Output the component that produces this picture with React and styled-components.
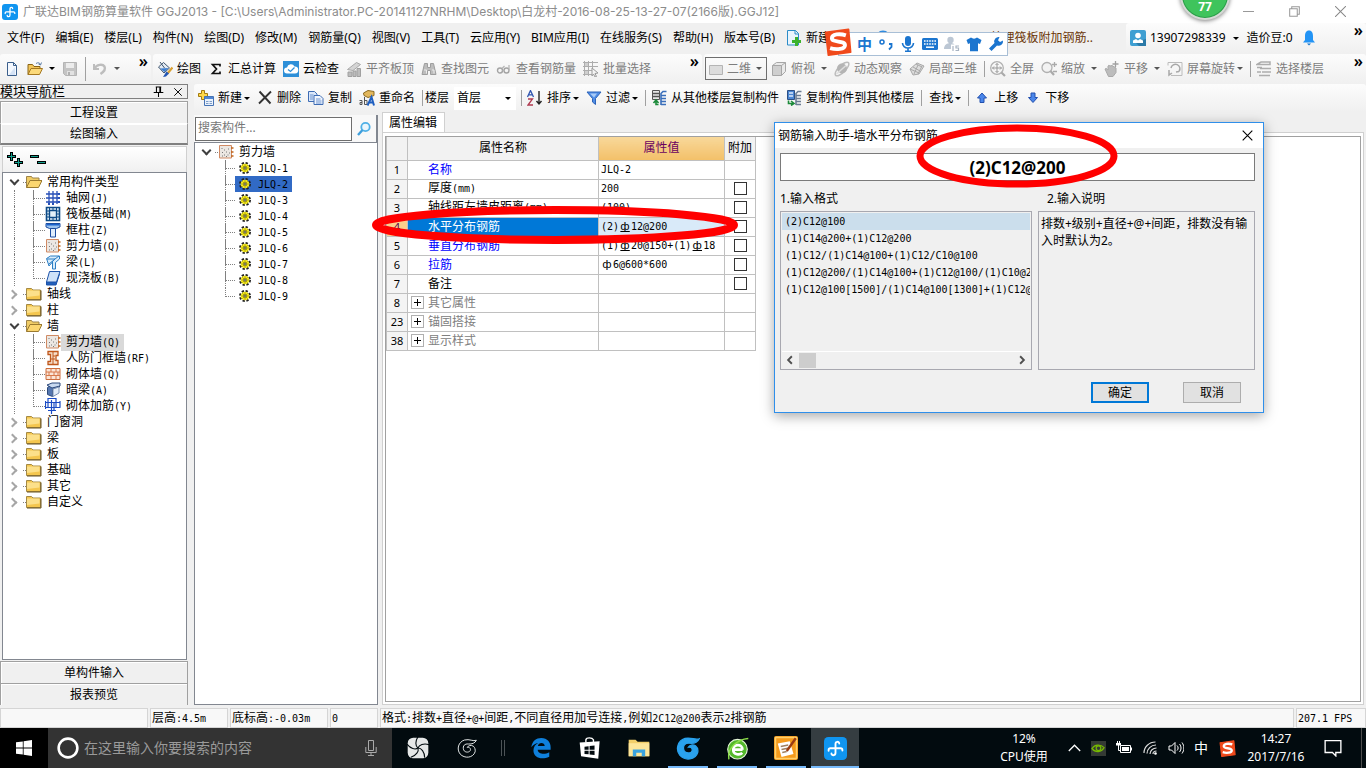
import { useState } from "react";
import styled, { createGlobalStyle } from "styled-components";

const GlobalStyle = createGlobalStyle`
  *, *::before {
    box-sizing: border-box;
  }
  body {
    margin: 0;
    font-family: "Noto Sans", "Noto Sans CJK SC", sans-serif;
    font-size: 12px;
    line-height: 16px;
    color: #000000;
    background-color: #f0f0f0;
  }
  button, input, select, textarea {
    font: inherit;
    color: inherit;
    margin: 0;
    padding: 0;
    border: none;
    background: none;
    outline: none;
  }
  svg {
    display: block;
    flex: none;
  }
`;

/* ---------- icons ---------- */

const Svg = ({ size = 16, children, ...rest }) => (
  <svg width={size} height={size} viewBox="0 0 16 16" fill="none" aria-hidden="true" {...rest}>
    {children}
  </svg>
);

const AppLogo = ({ size }) => (
  <Svg size={size}>
    <rect width="16" height="16" rx="3" fill="#1095f0" />
    <path
      d="M8 11V4.800C8 3 10.600 2.800 10.600 4.600M3.200 9.600V9c0-.8.400-1.200 1.200-1.200h7.200c.8 0 1.200.4 1.200 1.200v.4M8 11c0 2.200-2.800 2.200-2.800.4"
      stroke="#fff"
      strokeWidth="1.300"
      strokeLinecap="round"
    />
  </Svg>
);

const icons = {
  file: (
    <Svg>
      <path d="M3.500 1.500h6l3 3v10h-9z" fill="#f4f8fe" stroke="#3b5f8c" />
      <path d="M9.500 1.500v3h3" stroke="#3b5f8c" />
      <path d="M11 6v8H5z" fill="#d5e3f6" />
    </Svg>
  ),
  openFolder: (
    <Svg>
      <path d="M1 13.500V3.500h4.500l1.500 2h6v2" fill="#f3c65a" stroke="#8a6414" />
      <path d="M1 13.500l3-6h11.500l-3 6z" fill="#fbd97a" stroke="#a47720" />
      <path d="M9 2.500c2-1.500 4-.5 4.500 1M14.500 1.500l-1 2.500-2-1" stroke="#5c7ea8" />
    </Svg>
  ),
  save: (
    <Svg>
      <path d="M1.500 1.500h13v13h-11l-2-2z" fill="#c4c4c4" stroke="#b4b4b4" />
      <path d="M4 2h8v5H4z" fill="#ececec" />
      <path d="M5 10h7v4H5z" fill="#e2e2e2" />
      <path d="M6 11h2v3H6z" fill="#b0b0b0" />
    </Svg>
  ),
  undo: (
    <Svg>
      <path d="M2 3v5h5" stroke="#bdbdbd" strokeWidth="2" />
      <path d="M2.500 7.500c2-4 8-5 10-2 1.500 3-1 5.500-4 7.500" stroke="#bdbdbd" strokeWidth="2.400" />
    </Svg>
  ),
  draw: (
    <Svg>
      <path d="M1.500 6l5-4.500 6 5.500-5.500 5z" fill="#e3ebf4" stroke="#3f556e" />
      <path d="M3 1l4.500 6" stroke="#3f556e" />
      <path d="M3 7.500l8.500-.5-4 4z" fill="#3f7fd0" />
      <path d="M15.500 6.500l-5 6" stroke="#d9a032" strokeWidth="2.200" />
      <path d="M9.500 10.500l2.500 2-3 3-3 .5z" fill="#2457b4" />
    </Svg>
  ),
  sigma: (
    <Svg>
      <path d="M12 5.500V3.500H4.500L8.500 8l-4 4.500H12v-2" stroke="#111" strokeWidth="1.700" />
    </Svg>
  ),
  cloudCheck: (
    <Svg>
      <rect width="16" height="16" fill="#2d8fd8" />
      <path d="M4 12.500a3 3 0 010-6 4 4 0 017.500-1 3.500 3.500 0 01.5 7z" fill="#fff" />
      <path d="M5 8.500l2.500 2 4-4" stroke="#2d8fd8" strokeWidth="1.300" />
    </Svg>
  ),
  alignSlab: (
    <Svg>
      <path d="M1.500 8.500l9-7 4 2-7.500 6z" fill="#d5d5d5" stroke="#a9a9a9" />
      <path d="M2 11h4v4.500H2zM7 10h3v5.500H7zM11 7.500h3.500v8H11z" fill="#bcbcbc" stroke="#a0a0a0" />
    </Svg>
  ),
  binoculars: (
    <Svg>
      <path d="M3.500 2.500h3v4h3v-4h3l2.500 11H9.500V9.500h-3v4H1z" fill="#bdbdbd" stroke="#9e9e9e" />
      <path d="M3 9h2.500v3.500M11 9h2v3.500" stroke="#ececec" />
    </Svg>
  ),
  glasses: (
    <Svg>
      <circle cx="4" cy="9.500" r="2.500" stroke="#a4a4a4" strokeWidth="1.400" />
      <circle cx="10.500" cy="9.500" r="2.500" stroke="#a4a4a4" strokeWidth="1.400" />
      <path d="M6 7.500L8.500 5M13 9V4M6.500 9.500H8" stroke="#b4b4b4" strokeWidth="1.200" />
    </Svg>
  ),
  batch: (
    <Svg>
      <path d="M0 1.500h15M0 5.500h15M0 9.500h9M0 13.500h9M1.500 0v15M5.500 0v15M9.500 0v7" stroke="#adadad" />
      <path d="M2 2h3v3H2zM2 10h3v3H2z" fill="#cfcfcf" />
      <path d="M9 7l6 5-3 .5 1.500 3-1.500.5-1.500-3L9 15z" fill="#f4f4f4" stroke="#9a9a9a" />
    </Svg>
  ),
  plane: (
    <Svg>
      <path d="M1.500 4.500h13v9h-13z" fill="#dcdcdc" stroke="#b4b4b4" />
    </Svg>
  ),
  cube: (
    <Svg>
      <path d="M1.500 4.500l4-3h9v9l-4 4h-9z" fill="#e9e9e9" stroke="#a6a6a6" />
      <path d="M1.500 4.500h9v10M10.500 4.500l4-3" stroke="#a6a6a6" />
      <path d="M2 5h8v9H2z" fill="#cfcfcf" />
    </Svg>
  ),
  orbit: (
    <Svg>
      <ellipse cx="8" cy="8" rx="9" ry="3.500" transform="rotate(-45 8 8)" stroke="#bcbcbc" strokeWidth="1.500" />
      <circle cx="8" cy="7.500" r="5" fill="#b4b4b4" />
      <path d="M2.500 13L12 4.500" stroke="#dedede" strokeWidth="1.500" />
    </Svg>
  ),
  part3d: (
    <Svg>
      <path d="M1 8l7-6 7 3-5 8-6 1z" fill="#dedede" stroke="#a8a8a8" />
      <path d="M4 6l7 4M7 3l6 3M5 13l4-9M9 13l4-8M1 8l9 4" stroke="#a8a8a8" />
    </Svg>
  ),
  fullscreen: (
    <Svg>
      <circle cx="7" cy="7" r="6.300" stroke="#b0b0b0" strokeWidth="1.300" />
      <path d="M7 2.500v9M2.500 7h9M5.500 4L7 2.500 8.500 4M5.500 10L7 11.500 8.500 10M4 5.500L2.500 7 4 8.500M10 5.500L11.500 7 10 8.500" stroke="#999" />
      <path d="M11.500 11.500L15 15" stroke="#aaa" strokeWidth="2.200" />
    </Svg>
  ),
  zoom: (
    <Svg>
      <circle cx="6" cy="6.500" r="5" fill="#f2f2f2" stroke="#b0b0b0" strokeWidth="1.300" />
      <path d="M9.500 10l3.500 4" stroke="#aaa" strokeWidth="2.200" />
      <path d="M13.500 1v5M11 3.500h5M12 10.500h4" stroke="#aaa" strokeWidth="1.300" />
    </Svg>
  ),
  pan: (
    <Svg>
      <path d="M1 8c2-1.500 2.500 1 3 1V5c1-1.500 2 0 2 0l2-.5 4 2.500v4.500L9 15.500H4.500z" fill="#bcbcbc" stroke="#a8a8a8" />
      <path d="M11.500 0v6M8.500 3h6" stroke="#a0a0a0" strokeWidth="1.300" />
    </Svg>
  ),
  rotate: (
    <Svg>
      <path d="M1 4.500v-3h14v13H4" stroke="#bcbcbc" />
      <path d="M4 7a4.500 4.500 0 118 3.500M12 10.500l-3 .5M12 10.500l1-3M2 9v5l3-2" stroke="#a8a8a8" strokeWidth="1.500" />
    </Svg>
  ),
  floors: (
    <Svg>
      <path d="M1 3.500l4-2.500h9v2.500zM4 7.500h11M1 11h4M6 11h9M3 14.500h11M1 6.500h5" stroke="#adadad" strokeWidth="1.500" />
    </Svg>
  ),
  newItem: (
    <Svg>
      <path d="M3.500.5h3v3h3v3h-3v3h-3v-3h-3v-3h3z" fill="#ffd84a" stroke="#a37b10" />
      <path d="M6.500 6.500h9v9h-9z" fill="#eaf2fc" stroke="#4673b4" />
      <path d="M7 7h8v2H7z" fill="#4f86d4" />
      <path d="M8 11.500h2.500M11.500 11.500H14M8 13.500h2.500M11.500 13.500H14" stroke="#7d9dc8" />
    </Svg>
  ),
  cross: (
    <Svg>
      <path d="M2.500 1.500l11 12M14 1.500l-12 12" stroke="#333" strokeWidth="1.900" />
    </Svg>
  ),
  copy: (
    <Svg>
      <path d="M.5 1.500h6l2.500 2.500v7.500H.5z" fill="#dbe8fa" stroke="#3e6cb4" />
      <path d="M6 5.500h6l3 3v6H6z" fill="#f1f6fe" stroke="#3e6cb4" />
      <path d="M2 5h3.500M2 7h3M2 9h3M8 9h4.500M8 11h5.500M8 13h5.500" stroke="#6a92cf" />
    </Svg>
  ),
  rename: (
    <Svg>
      <path d="M4.500 3L9 .5l6 1v4L9 7.500 5 5.500z" fill="#e2b75c" stroke="#8b6a22" />
      <path d="M.5 10.500H3v4H1v-2h2M5.500 7v7.500H8v-4H5.500" stroke="#555" />
      <path d="M8.500 15.500L12.500 7 15 15.500M10 12.500h4.500" stroke="#1f5fc0" strokeWidth="2" />
    </Svg>
  ),
  sort: (
    <Svg>
      <path d="M.5 7L3.500 .5l3 6.500M1.500 4.800h4" stroke="#2f55b0" strokeWidth="1.300" />
      <path d="M1 9h4.500L1 15h5" stroke="#b03a50" strokeWidth="1.300" />
      <path d="M12 1v13M9.500 11l2.500 3 2.500-3" stroke="#222" strokeWidth="1.400" />
    </Svg>
  ),
  filter: (
    <Svg>
      <path d="M1 2h14L9.500 8.500V14.500l-3-2.500V8.500z" fill="#4f8de6" stroke="#2d63b8" />
      <path d="M4 3.500h7l-3 4z" fill="#a9cbf7" />
    </Svg>
  ),
  fromFloor: (
    <Svg>
      <path d="M1.500.5h7v9h-7z" fill="#e8e8e8" stroke="#555" />
      <path d="M2 3.500h6M2 6.500h6" stroke="#555" strokeWidth="1.600" />
      <path d="M10 15V3.500L12 1.500h3.500M10 5.500h5M10 8.500h5M10 11.500h5M10 14.500h5" stroke="#3a6fbb" strokeWidth="1.600" />
      <path d="M7.500 14.500H5V11M2.500 13L5 10l2.500 3" stroke="#1c8a3a" strokeWidth="1.600" />
    </Svg>
  ),
  toFloor: (
    <Svg>
      <path d="M1.500.5h7v9h-7z" fill="#4b86d2" stroke="#2c4f86" />
      <path d="M3 3h4M3 6h4" stroke="#dce9fb" strokeWidth="1.600" />
      <path d="M10 15V3.500L12 1.500h3.500M10 5.500h5M10 8.500h5M10 11.500h5M10 14.500h5" stroke="#6b7d94" strokeWidth="1.600" />
      <path d="M2.500 10.500v3H7M5 11l3 2.500-3 2" stroke="#1c8a3a" strokeWidth="1.600" />
    </Svg>
  ),
  up: (
    <Svg>
      <path d="M8 3l4.500 5H10v4.500H6V8H3.500z" fill="#4a86ea" stroke="#2350ae" />
    </Svg>
  ),
  down: (
    <Svg>
      <path d="M8 12.500L3.500 7.500H6V3h4v4.500h2.500z" fill="#4a86ea" stroke="#2350ae" />
    </Svg>
  ),
  newProject: (
    <Svg>
      <path d="M1.500.5h8l3 3v11.500h-11z" fill="#e9f4fd" stroke="#2b8cc8" />
      <path d="M9 .5V4h3.500" stroke="#2b8cc8" />
      <path d="M9 7h3v3h3v3h-3v3H9v-3H6v-3h3z" fill="#3bb22c" />
    </Svg>
  ),
  help: (
    <Svg>
      <circle cx="8" cy="8" r="7.500" fill="#2f8be0" />
    </Svg>
  ),
  user: (
    <Svg>
      <rect width="16" height="16" rx="2" fill="#3f9fd2" />
      <path d="M16 9v7H9L5 12z" fill="#2b7aa8" />
      <circle cx="8" cy="5.500" r="2.800" fill="#fff" />
      <path d="M3 13V10.500l3-1.500 2 1.500L10 9l3 1.500V13z" fill="#fff" />
    </Svg>
  ),
  bell: (
    <Svg>
      <path d="M8 .5c3 0 4 2.500 4 5.500v4l2 2.500H2L4 10V6C4 3 5 .5 8 .5z" fill="#2394f5" />
      <path d="M6 13.500h4L8 15.500z" fill="#1673c8" />
    </Svg>
  ),
  folderOpenTree: (
    <Svg>
      <path d="M.5 13.500v-11h5l1 1.500h6.500v3" fill="#f0cc66" stroke="#9d8348" />
      <path d="M.5 13.500L4 6.500h12l-3.500 7z" fill="#fbd670" stroke="#9a7a30" />
    </Svg>
  ),
  folder: (
    <Svg>
      <path d="M.5 13.500v-11h5l1.500 1.500h7.500v9.500z" fill="#f4c64e" stroke="#a58a44" />
      <path d="M1 4.500h12.500v5L1 11z" fill="#fce08a" />
      <path d="M15 4.500v9.500H1" stroke="#6b5420" />
    </Svg>
  ),
  grid: (
    <Svg>
      <path d="M4 1v13M8 1v13M12 1v13M1 4h12M1 8h12M1 12h12" stroke="#2850b8" strokeWidth="1.300" />
      <path d="M13 3h2v2h-2zM13 7h2v2h-2zM13 11h2v2h-2zM3 13h2v2H3zM7 13h2v2H7z" fill="#2850b8" />
    </Svg>
  ),
  raft: (
    <Svg>
      <path d="M1.500 1.500h13v13h-13z" fill="#e3f0f8" stroke="#0d4a86" strokeWidth="1.600" />
      <path d="M4.500 4.500h7v7h-7z" stroke="#0d4a86" strokeWidth="1.400" />
      <path d="M4.500 1v4M8 1v3M11.500 1v4M1 5h3.500M1 8h3M1 11h3.500M12 5h3M12 8h3M12 11h3M4.500 12v3M8 12v3M11.500 12v3" stroke="#0d4a86" />
    </Svg>
  ),
  column: (
    <Svg>
      <path d="M1 1.500h14v3.500l-3.500 1.500h-7L1 5z" fill="#9cc3ee" stroke="#1c4da0" />
      <path d="M1.500 2h13v1.500h-13z" fill="#1b63cc" />
      <path d="M5.500 6.500h5v8.500h-5z" fill="#dfedfb" stroke="#1c4da0" />
    </Svg>
  ),
  wall: (
    <Svg>
      <path d="M1.500 1.500h12v12.500H1.500z" fill="#ece7e2" stroke="#d08a64" />
      <path d="M3.500 4.500h1M6 6h1M4 8.500h1M8 8h1M10 5h1M6 11h1M9.500 11h1M4 12h1M8 12.500h1M11 9h1" stroke="#777" />
      <path d="M13 4h2.500M13 8h2.500M13 12h2.500" stroke="#c0651d" strokeWidth="1.500" />
    </Svg>
  ),
  beam: (
    <Svg>
      <path d="M1.500 4.500l4-2.500h9v3l-4 3.500v6.500h-3V8L4 12z" fill="#d9ecfa" stroke="#2c7ec4" />
      <path d="M2 5h8l4-3M10 5l-6 5M7 8l3-3" stroke="#2c7ec4" />
    </Svg>
  ),
  slab: (
    <Svg>
      <path d="M1.500 12v3H11l3.500-11" fill="#2361bc" stroke="#1c52a8" />
      <path d="M4.500 1.500H15L11.500 12h-10z" fill="#cfe2f8" stroke="#1c52a8" />
    </Svg>
  ),
  frameWall: (
    <Svg>
      <path d="M3 1.500h10v4h-2v5h2v4H3v-3h2.500v-7H3z" fill="#f7e0cc" stroke="#c0571c" strokeWidth="1.300" />
      <path d="M8 2v12M8 6h2M6 9h4" stroke="#c0571c" />
    </Svg>
  ),
  brick: (
    <Svg>
      <path d="M1 2.500h14v11H1z" fill="#fbe5d6" stroke="#cc6d3d" />
      <path d="M1 6h14M1 9.500h14M6 2.500V6M11 2.500V6M4 6v3.500M9 6v3.500M13 6v3.500M6 9.500v4M11 9.500v4" stroke="#d8794a" />
    </Svg>
  ),
  hiddenBeam: (
    <Svg>
      <path d="M2.500 5.500l5-3.500h7v3l-7 2.500v7l-5-2z" fill="#5577b0" stroke="#2d4a7c" />
      <path d="M2 3l5-2h8v3L7 6z" fill="#c9daf0" stroke="#2d4a7c" />
      <path d="M8 7l6-2v6l-6 3.500z" fill="#e4edf8" stroke="#7d93b4" />
    </Svg>
  ),
  brickRebar: (
    <Svg>
      <path d="M3 .5h8v9H3zM0 4.500h15.500M0 9.500h15.500M6.500 2v14M9 5v8M.5 3v8M15 3v6M3 12.500h8" stroke="#1a4bc4" strokeWidth="1.200" />
    </Svg>
  ),
  rebar: (
    <Svg size={12}>
      <circle cx="8" cy="8" r="6.500" stroke="#222" strokeWidth="3" strokeDasharray="3 2.100" />
      <circle cx="8" cy="8" r="5.800" fill="#f7ea1c" />
      <path d="M8 3v10M3 8h10M4.500 4.500l7 7M11.500 4.500l-7 7" stroke="#6a6600" strokeWidth=".7" />
      <circle cx="8" cy="8" r="1.500" fill="#fffbd0" stroke="#222" />
    </Svg>
  ),
  magnifier: (
    <Svg>
      <circle cx="9.500" cy="6" r="4.200" fill="#eaf6fd" stroke="#4fb0e6" strokeWidth="1.800" />
      <path d="M6.500 9L2 14" stroke="#3f9fdc" strokeWidth="2.400" />
    </Svg>
  ),
  expandAll: (
    <Svg>
      <path d="M4.500 0v9M0 4.500h9M11.500 6v9M7 10.500h9" stroke="#000" strokeWidth="3" />
      <path d="M4.500 1v7M1 4.500h7M11.500 7v7M8 10.500h7" stroke="#12a08e" strokeWidth="1" />
    </Svg>
  ),
  collapseAll: (
    <Svg>
      <path d="M0 4.500h9M7 10.500h9" stroke="#000" strokeWidth="3" />
      <path d="M1 4.500h7M8 10.500h7" stroke="#12a08e" strokeWidth="1" />
    </Svg>
  ),
};

/* ---------- shared pieces ---------- */

const Latin = styled.span`
  font-family: "DejaVu Sans Mono", monospace;
  font-size: 10px;
`;

// Half-width characters take 6px, full-width ones take 12px
function Mono({ children }) {
  return children
    .split(/([\x20-\x7e]+)/)
    .filter(Boolean)
    .map((part, i) => (/^[\x20-\x7e]/.test(part) ? <Latin key={i}>{part}</Latin> : part));
}

const Arrow = styled.span`
  flex: none;
  width: 0;
  height: 0;
  border: 3px solid transparent;
  border-top-color: ${(props) => props.$color || "#000000"};
  border-bottom-width: 0;
  margin: 0 ${(props) => props.$gap || 0}px 0 ${(props) => props.$before ?? -2}px;
`;

const More = styled.button`
  align-self: flex-start;
  margin-left: auto;
  padding: 1px 3px 0 0;
  font-size: 16px;
  font-weight: 600;
  line-height: 12px;
`;

const Strip = styled.div`
  display: flex;
  align-items: center;
  min-width: 0;
  flex: ${(props) => props.$flex || "none"};
  width: ${(props) => props.$width || "auto"};
  padding-left: ${(props) => props.$pad || 4}px;
  white-space: nowrap;
  border-radius: 3px;
  background: linear-gradient(#fcfcfc, #f0f0f0);
`;

const Tool = styled.button`
  display: flex;
  align-items: center;
  gap: 4px;
  padding-right: 7px;
  white-space: nowrap;
  color: ${(props) => (props.$off ? "#7d7d7d" : "#000000")};
`;

const Divider = styled.span`
  flex: none;
  width: 1px;
  height: ${(props) => props.$height || 16}px;
  margin-right: ${(props) => props.$gap || 5}px;
  background-color: #a0a0a0;
`;

/* ---------- title and menu ---------- */

const Screen = styled.div`
  position: relative;
  display: flex;
  flex-direction: column;
  min-height: 100vh;
  overflow: hidden;
`;

const TitleBar = styled.header`
  display: flex;
  align-items: center;
  gap: 5px;
  height: 23px;
  padding: 0 20px 0 2px;
  background-color: #ffffff;
  color: #8c8c8c;
  font-family: Inter, "Noto Sans CJK SC", sans-serif;
  white-space: nowrap;
`;

const WindowButtons = styled.div`
  display: flex;
  gap: 35px;
  margin-left: auto;
`;

const MenuRow = styled.div`
  display: flex;
  height: 31px;
  padding-bottom: 1px;
`;

const MenuBar = styled.nav`
  display: flex;
  align-items: center;
  gap: 11px;
  padding: 0 11px 0 7px;
  white-space: nowrap;
`;

const HiddenTools = styled.div`
  flex: 1;
  display: flex;
  align-items: center;
  gap: 38px;
`;

const Hint = styled.a`
  margin-left: auto;
  padding-right: 33px;
  color: #6b3606;
  text-decoration: none;
  white-space: nowrap;
`;

const BellButton = styled.button`
  padding-left: 8px;
`;

const ToolRow = styled.div`
  display: flex;
  gap: 2px;
  height: 29px;
  margin-bottom: 1px;
`;

const SelectBox = styled.div`
  display: flex;
  align-items: center;
  width: 62px;
  height: 23px;
  padding: 0 4px 0 2px;
  border: 1px solid ${(props) => (props.$plain ? "#ffffff" : "#6e6e6e")};
  background-color: ${(props) => (props.$plain ? "#ffffff" : "transparent")};
  color: ${(props) => (props.$plain ? "#000000" : "#7d7d7d")};
  margin: 0 ${(props) => props.$gap}px 0 ${(props) => (props.$plain ? 5 : 0)}px;
`;

const Select = styled.select`
  appearance: none;
  flex: 1;
  min-width: 0;
  padding-left: ${(props) => props.$pad || 0}px;
`;

const menus = [
  "文件(F)", "编辑(E)", "楼层(L)", "构件(N)", "绘图(D)", "修改(M)", "钢筋量(Q)",
  "视图(V)", "工具(T)", "云应用(Y)", "BIM应用(I)", "在线服务(S)", "帮助(H)", "版本号(B)",
];

function Header() {
  return (
    <>
      <TitleBar>
        <AppLogo size={16} />
        <span>
          广联达BIM钢筋算量软件 GGJ2013 - [C:\Users\Administrator.PC-20141127NRHM\Desktop\白龙村-2016-08-25-13-27-07(2166版).GGJ12]
        </span>
        <WindowButtons>
          <button aria-label="最小化">
            <Svg size={11}><path d="M0 8h16" stroke="#999" strokeWidth="1.500" /></Svg>
          </button>
          <button aria-label="还原">
            <Svg size={11}><path d="M1 4h11v11H1zM4 4V1h11v11h-3" stroke="#999" strokeWidth="1.500" /></Svg>
          </button>
          <button aria-label="关闭">
            <Svg size={11}><path d="M0 0l16 16M16 0L0 16" stroke="#888" strokeWidth="1.500" /></Svg>
          </button>
        </WindowButtons>
      </TitleBar>
      <MenuRow>
        <MenuBar>
          {menus.map((menu) => <button key={menu}>{menu}</button>)}
        </MenuBar>
        <HiddenTools>
          <Tool>{icons.newProject}新建</Tool>
          {icons.help}
          <Hint href="#">处理筏板附加钢筋..</Hint>
        </HiddenTools>
        <Strip $width="240px">
          <Tool>{icons.user}13907298339</Tool>
          <Arrow $before={0} $gap={8} />
          <span>造价豆:0</span>
          <BellButton aria-label="消息">{icons.bell}</BellButton>
          <More>»</More>
        </Strip>
      </MenuRow>
    </>
  );
}

const drawTools = [
  ["draw", "绘图"],
  ["sigma", "汇总计算"],
  ["cloudCheck", "云检查"],
  ["alignSlab", "平齐板顶", true],
  ["binoculars", "查找图元", true],
  ["glasses", "查看钢筋量", true],
  ["batch", "批量选择", true],
];

function Toolbar() {
  const grey = "#555555";
  return (
    <ToolRow>
      <Strip $width="151px">
        <Tool aria-label="新建工程">{icons.file}</Tool>
        <Tool aria-label="打开">{icons.openFolder}<Arrow $before={2} /></Tool>
        <Tool aria-label="保存" $off>{icons.save}</Tool>
        <Divider $height={24} $gap={6} />
        <Tool aria-label="撤销" $off>{icons.undo}<Arrow $color={grey} $before={2} /></Tool>
        <More>»</More>
      </Strip>
      <Strip $width="549px">
        {drawTools.map(([icon, label, off]) => (
          <Tool key={label} $off={off}>{icons[icon]}{label}</Tool>
        ))}
        <More>»</More>
      </Strip>
      <Strip $flex="1" $pad={1}>
        <SelectBox $gap={4}>
          {icons.plane}
          <Select aria-label="视图模式" $pad={3}><option>二维</option></Select>
          <Arrow $color={grey} />
        </SelectBox>
        <Tool $off>{icons.cube}俯视<Arrow $color={grey} $before={2} /></Tool>
        <Tool $off>{icons.orbit}动态观察</Tool>
        <Tool $off>{icons.part3d}局部三维</Tool>
        <Divider />
        <Tool $off>{icons.fullscreen}全屏</Tool>
        <Tool $off>{icons.zoom}缩放<Arrow $color={grey} $before={2} /></Tool>
        <Tool $off>{icons.pan}平移<Arrow $color={grey} $before={2} /></Tool>
        <Tool $off>{icons.rotate}屏幕旋转<Arrow $color={grey} /></Tool>
        <Divider />
        <Tool $off>{icons.floors}选择楼层</Tool>
        <More>»</More>
      </Strip>
    </ToolRow>
  );
}

function ComponentBar() {
  return (
    <Strip as="section" $pad={4}>
      <Tool>{icons.newItem}新建<Arrow /></Tool>
      <Tool>{icons.cross}删除</Tool>
      <Tool>{icons.copy}复制</Tool>
      <Tool>{icons.rename}重命名</Tool>
      <Divider $gap={2} />
      <label htmlFor="floor">楼层</label>
      <SelectBox $gap={5} $plain>
        <Select id="floor"><option>首层</option></Select>
        <Arrow />
      </SelectBox>
      <Divider />
      <Tool>{icons.sort}排序<Arrow /></Tool>
      <Tool>{icons.filter}过滤<Arrow /></Tool>
      <Divider />
      <Tool>{icons.fromFloor}从其他楼层复制构件</Tool>
      <Tool>{icons.toFloor}复制构件到其他楼层</Tool>
      <Divider $gap={7} />
      <Tool>查找<Arrow /></Tool>
      <Divider />
      <Tool>{icons.up}上移</Tool>
      <Tool>{icons.down}下移</Tool>
    </Strip>
  );
}

/* ---------- trees ---------- */

const Tree = styled.ul`
  flex: 1;
  margin: 0;
  padding: 1px 0 0 3px;
  list-style: none;
  border: 1px solid #828790;
  background-color: #ffffff;

  ul {
    margin: 0;
    padding: 0;
    list-style: none;
  }
`;

const Node = styled.div`
  display: flex;
  align-items: center;
  height: 16px;
  white-space: nowrap;
`;

const Expander = styled.button`
  display: flex;
  align-items: center;
  justify-content: center;
  width: 16px;
  height: 16px;
  margin-right: 1px;
  padding: ${(props) => (props.$open ? "0 0 4px" : "0 4px 0 0")};

  &::before {
    content: "";
    width: 7px;
    height: 7px;
    border: solid ${(props) => (props.$open ? "#404040" : "#a6a6a6")};
    border-width: 0 2px 2px 0;
    transform: rotate(${(props) => (props.$open ? 45 : -45)}deg);
  }
`;

const Dash = styled.span`
  width: 3px;
  border-top: 1px dotted #808080;
`;

const NodeLabel = styled.span`
  padding: 0 ${(props) => (props.$active ? 4 : 0)}px 0 5px;
  background-color: ${(props) => (props.$active ? "#d9d9d9" : "transparent")};
`;

const Stem = styled.span`
  align-self: stretch;
  width: 19px;
  margin-left: 8px;
  border-left: 1px dotted ${(props) => (props.$hidden ? "transparent" : "#808080")};
`;

const Branch = styled.span`
  align-self: stretch;
  width: ${(props) => (props.$short ? 10 : 12)}px;
  border-left: 1px dotted ${(props) => (props.$last ? "transparent" : "#808080")};

  &::before {
    content: "";
    display: block;
    height: 9px;
    margin-left: -1px;
    border-left: 1px dotted #808080;
    border-bottom: 1px dotted #808080;
  }
`;

const Picked = styled.span`
  display: flex;
  align-items: center;
  gap: 2px;
  height: 16px;
  padding: 0 4px;
  background-color: ${(props) => (props.$active ? "#316ac5" : "transparent")};
`;

const moduleTree = [
  {
    label: "常用构件类型",
    items: [
      ["grid", "轴网(J)"],
      ["raft", "筏板基础(M)"],
      ["column", "框柱(Z)"],
      ["wall", "剪力墙(Q)"],
      ["beam", "梁(L)"],
      ["slab", "现浇板(B)"],
    ],
  },
  { label: "轴线" },
  { label: "柱" },
  {
    label: "墙",
    active: "剪力墙(Q)",
    items: [
      ["wall", "剪力墙(Q)"],
      ["frameWall", "人防门框墙(RF)"],
      ["brick", "砌体墙(Q)"],
      ["hiddenBeam", "暗梁(A)"],
      ["brickRebar", "砌体加筋(Y)"],
    ],
  },
  { label: "门窗洞" },
  { label: "梁" },
  { label: "板" },
  { label: "基础" },
  { label: "其它" },
  { label: "自定义" },
];

function ModuleTree() {
  return (
    <Tree>
      {moduleTree.map((group) => (
        <li key={group.label}>
          <Node>
            <Expander $open={!!group.items} aria-label={group.label} />
            <Dash />
            {group.items ? icons.folderOpenTree : icons.folder}
            <NodeLabel>{group.label}</NodeLabel>
          </Node>
          {group.items && (
            <ul>
              {group.items.map(([icon, label], i) => (
                <li key={label}>
                  <Node>
                    <Stem />
                    <Branch $last={i === group.items.length - 1} />
                    {icons[icon]}
                    <NodeLabel $active={group.active === label}><Mono>{label}</Mono></NodeLabel>
                  </Node>
                </li>
              ))}
            </ul>
          )}
        </li>
      ))}
    </Tree>
  );
}

/* ---------- left panel ---------- */

const Main = styled.main`
  flex: 1;
  display: flex;
  gap: 6px;
  padding-bottom: 3px;
`;

const Dock = styled.aside`
  display: flex;
  flex-direction: column;
  width: 188px;
`;

const DockTitle = styled.div`
  display: flex;
  align-items: center;
  gap: 9px;
  height: 15px;
  margin-bottom: 2px;
  padding-right: 4px;
  border: 1px solid #808080;
  border-left: none;
  line-height: 13px;

  span {
    flex: 1;
    font-size: 13px;
  }
`;

const DockButton = styled.button`
  height: 22px;
  border: 1px solid #a0a0a0;
  border-top-color: ${(props) => (props.$pressed ? "#ffffff" : "#a0a0a0")};
  border-bottom: ${(props) => (props.$pressed ? "2px solid #808080" : "none")};
  background-color: #f0f0f0;
  box-shadow: inset 1px 1px 0 #ffffff;
`;

const DockTools = styled.div`
  display: flex;
  gap: 7px;
  height: 26px;
  padding: 5px 4px;
  border: 1px solid #d0d0d0;
  border-bottom: none;
  background: linear-gradient(#ffffff, #f0f0f0);
`;

const DockBody = styled.div`
  flex: 1;
  display: flex;
  flex-direction: column;
  padding: 1px 1px 1px 2px;
`;

function ModuleDock() {
  return (
    <Dock>
      <DockTitle>
        <span>模块导航栏</span>
        <button aria-label="固定">
          <Svg size={11}><path d="M4 1.500h8M5 1v8M11 1v8M10 1v8M1 9.500h14M8 10v6" stroke="#000" strokeWidth="1.500" /></Svg>
        </button>
        <button aria-label="关闭导航栏">
          <Svg size={10}><path d="M2 2l12 12M14 2L2 14" stroke="#000" strokeWidth="1.500" /></Svg>
        </button>
      </DockTitle>
      <DockButton>工程设置</DockButton>
      <DockButton $pressed>绘图输入</DockButton>
      <DockBody>
        <DockTools>
          <button aria-label="全部展开">{icons.expandAll}</button>
          <button aria-label="全部折叠">{icons.collapseAll}</button>
        </DockTools>
        <ModuleTree />
      </DockBody>
      <DockButton>单构件输入</DockButton>
      <DockButton>报表预览</DockButton>
    </Dock>
  );
}

/* ---------- component list ---------- */

const Work = styled.div`
  flex: 1;
  min-width: 0;
  display: grid;
  grid-template: 28px 1fr / 184px 1fr;
  column-gap: 4px;

  > section {
    grid-column: 1 / -1;
  }
`;

const ListPane = styled.div`
  display: flex;
  flex-direction: column;
  margin-top: 3px;
`;

const SearchRow = styled.form`
  display: flex;
  height: 27px;
  padding: 2px 0 1px 1px;
  border-right: 2px solid #828790;
  background-color: #f8f8f8;
`;

const SearchInput = styled.input`
  flex: 1;
  min-width: 0;
  padding: 0 0 2px 2px;
  border: 1px solid #6e6e6e;
  background-color: #ffffff;

  &::placeholder {
    color: #777777;
    opacity: 1;
  }
`;

const SearchButton = styled.button`
  width: 24px;
  padding: 0 4px;
`;

const names = Array.from({ length: 9 }, (_, i) => `JLQ-${i + 1}`);

function ComponentList() {
  const [keyword, setKeyword] = useState("");

  return (
    <ListPane>
      <SearchRow onSubmit={(e) => e.preventDefault()}>
        <SearchInput
          aria-label="搜索构件"
          placeholder="搜索构件..."
          value={keyword}
          onChange={(e) => setKeyword(e.target.value)}
        />
        <SearchButton aria-label="搜索">{icons.magnifier}</SearchButton>
      </SearchRow>
      <Tree>
        <li>
          <Node>
            <Expander $open aria-label="剪力墙" />
            <Dash />
            {icons.wall}
            <NodeLabel>剪力墙</NodeLabel>
          </Node>
          <ul>
            {names.map((name, i) => (
              <li key={name}>
                <Node>
                  <Stem $hidden />
                  <Branch $short $last={i === names.length - 1} />
                  <Picked $active={name === "JLQ-2"}>
                    {icons.rebar}
                    <NodeLabel><Mono>{name}</Mono></NodeLabel>
                  </Picked>
                </Node>
              </li>
            ))}
          </ul>
        </li>
      </Tree>
    </ListPane>
  );
}

/* ---------- property table ---------- */

const PropertyPane = styled.div`
  display: flex;
  flex-direction: column;
  padding-right: 2px;
`;

const Tab = styled.button`
  align-self: flex-start;
  height: 21px;
  padding: 0 7px 0 6px;
  margin-bottom: -1px;
  border: 1px solid #d0d0d0;
  border-bottom: none;
  background-color: #ffffff;
`;

const TabPage = styled.div`
  flex: 1;
  display: flex;
  padding: 3px 2px 2px;
  border: 1px solid #d0d0d0;
  background-color: #ffffff;
`;

const Sheet = styled.div`
  flex: 1;
  border: 1px solid #a0a0a0;
`;

const Table = styled.table`
  border-collapse: collapse;
  table-layout: fixed;
  width: 369px;

  th, td {
    height: 19px;
    padding: 0;
    border: 1px solid #c0c0c0;
    font-weight: 400;
    line-height: 16px;
    white-space: nowrap;
  }
  thead th {
    height: 23px;
    background-color: #f2f2f2;
    border-top: none;
  }
`;

const ValueHead = styled.th`
  && {
    background: linear-gradient(#f8d89a, #f3c069);
    color: #6a005f;
  }
`;

const RowHead = styled.th`
  font-size: 11px;
  color: ${(props) => (props.$selected ? "#500050" : "#000000")};
  background-color: ${(props) => (props.$selected ? "#fccf8c" : "#f4f4f4")};
`;

const NameCell = styled.td`
  color: ${(props) => props.$color || "#000000"};
  background-color: ${(props) => (props.$selected ? "#0078d7" : "#ffffff")};
`;

const NameText = styled.div`
  display: flex;
  align-items: center;
  gap: 4px;
  padding-left: ${(props) => (props.$group ? 3 : 20)}px;
`;

const Plus = styled.button`
  width: 13px;
  height: 13px;
  border: 1px solid #b0b0b0;
  color: #000000;
  background: linear-gradient(#000, #000) center / 7px 1px no-repeat, linear-gradient(#000, #000) center / 1px 7px no-repeat;
`;

const ValueCell = styled.td`
  background-color: ${(props) => (props.$selected ? "#d9eaf9" : "#ffffff")};

  div {
    padding-left: 2px;
  }
`;

const Check = styled.input`
  appearance: none;
  display: block;
  width: 13px;
  height: 13px;
  margin: 0 auto;
  border: 1px solid #333333;
  background-color: #ffffff;

  &:checked {
    background-color: #0078d7;
  }
`;

const Grade = styled.span`
  display: inline-block;
  width: 12px;
  text-align: center;
  font-family: "DejaVu Sans", sans-serif;
  font-size: 11px;
  line-height: 12px;
  text-decoration: ${(props) => (props.$ribbed ? "underline" : "none")};
  text-underline-offset: 1px;
  text-decoration-skip-ink: none;
`;

const rows = [
  { no: 1, name: "名称", color: "#0000ff", value: "JLQ-2" },
  { no: 2, name: "厚度(mm)", value: "200", check: true },
  { no: 3, name: "轴线距左墙皮距离(mm)", value: "(100)", check: true },
  { no: 4, name: "水平分布钢筋", color: "#ffffff", value: "(2)Ф12@200", check: true, selected: true },
  { no: 5, name: "垂直分布钢筋", color: "#0000ff", value: "(1)Ф20@150+(1)Ф18", check: true },
  { no: 6, name: "拉筋", color: "#0000ff", value: "ф6@600*600", check: true },
  { no: 7, name: "备注", value: "", check: true },
  { no: 8, name: "其它属性", color: "#808080", value: "", group: true },
  { no: 23, name: "锚固搭接", color: "#808080", value: "", group: true },
  { no: 38, name: "显示样式", color: "#808080", value: "", group: true },
];

// Ф stands for ribbed bar, ф for plain bar
function Value({ text }) {
  return text
    .split(/([Фф])/)
    .filter(Boolean)
    .map((part, i) =>
      /[Фф]/.test(part) ? <Grade key={i} $ribbed={part === "Ф"}>ф</Grade> : <Mono key={i}>{part}</Mono>
    );
}

function PropertyTable() {
  return (
    <PropertyPane>
      <Tab>属性编辑</Tab>
      <TabPage>
        <Sheet>
          <Table>
            <colgroup>
              <col width="21" />
              <col width="191" />
              <col width="126" />
              <col width="31" />
            </colgroup>
            <thead>
              <tr>
                <th aria-label="行号" />
                <th>属性名称</th>
                <ValueHead>属性值</ValueHead>
                <th>附加</th>
              </tr>
            </thead>
            <tbody>
              {rows.map((row) => (
                <tr key={row.no}>
                  <RowHead $selected={row.selected}>{row.no}</RowHead>
                  <NameCell $color={row.color} $selected={row.selected}>
                    <NameText $group={row.group}>
                      {row.group && <Plus aria-label={`展开${row.name}`} />}
                      <span><Mono>{row.name}</Mono></span>
                    </NameText>
                  </NameCell>
                  <ValueCell $selected={row.selected}>
                    <div><Value text={row.value} /></div>
                  </ValueCell>
                  <td>
                    {row.check && <Check type="checkbox" aria-label={`附加${row.name}`} />}
                  </td>
                </tr>
              ))}
            </tbody>
          </Table>
        </Sheet>
      </TabPage>
    </PropertyPane>
  );
}

/* ---------- dialog ---------- */

const Dialog = styled.div`
  position: absolute;
  left: 774px;
  top: 122px;
  width: 490px;
  border: 1px solid #2f8fea;
  background-color: #f0f0f0;
  box-shadow: 0 3px 12px rgba(0, 0, 0, 0.35);
`;

const DialogTitle = styled.div`
  display: flex;
  align-items: center;
  justify-content: space-between;
  height: 25px;
  padding: 0 10px 0 3px;
  background-color: #ffffff;
`;

const DialogBody = styled.div`
  padding: 5px 8px 9px 5px;
`;

const RebarInput = styled.input`
  width: 100%;
  height: 28px;
  border: 1px solid #7a7a7a;
  background-color: #ffffff;
  font-size: 17px;
  font-weight: 700;
  text-align: center;
`;

const Columns = styled.div`
  display: grid;
  grid-template-columns: 252px 1fr;
  column-gap: 6px;
  padding-top: 10px;
`;

const Caption = styled.div`
  height: 20px;
  padding-left: ${(props) => props.$indent || 0}px;
`;

const Box = styled.div`
  display: flex;
  flex-direction: column;
  height: 159px;
  padding: 1px;
  border: 1px solid #a8a8b0;
  overflow: hidden;
`;

const Format = styled.button`
  display: block;
  height: 17px;
  padding-left: 3px;
  text-align: left;
  white-space: pre;
  overflow: hidden;
  flex: none;
  background-color: ${(props) => (props.$active ? "#cbdeec" : "transparent")};
`;

const ScrollBar = styled.div`
  display: flex;
  align-items: center;
  height: 17px;
  margin-top: auto;
  padding: 0 3px;
  border-top: 1px solid #ffffff;
`;

const Thumb = styled.span`
  width: 17px;
  height: 15px;
  margin: 0 auto 0 4px;
  background-color: #cdcdcd;
`;

const Description = styled.p`
  margin: 0;
  padding: 2px 0 0 1px;
  line-height: 17px;
`;

const Actions = styled.div`
  display: flex;
  justify-content: flex-end;
  gap: 34px;
  padding: 12px 14px 0 0;
`;

const Action = styled.button`
  width: 58px;
  height: 21px;
  border: ${(props) => (props.$primary ? "2px solid #0078d7" : "1px solid #adadad")};
  background-color: #e1e1e1;
`;

const formats = [
  "(2)C12@100",
  "(1)C14@200+(1)C12@200",
  "(1)C12/(1)C14@100+(1)C12/C10@100",
  "(1)C12@200/(1)C14@100+(1)C12@100/(1)C10@200",
  "(1)C12@100[1500]/(1)C14@100[1300]+(1)C12@100",
];

function RebarDialog() {
  const [value, setValue] = useState("(2)C12@200");

  return (
    <Dialog role="dialog" aria-label="钢筋输入助手">
      <DialogTitle>
        <span>钢筋输入助手-墙水平分布钢筋</span>
        <button aria-label="关闭助手">
          <Svg size={11}><path d="M1 1l14 14M15 1L1 15" stroke="#000" strokeWidth="1.600" /></Svg>
        </button>
      </DialogTitle>
      <DialogBody>
        <RebarInput aria-label="钢筋" value={value} onChange={(e) => setValue(e.target.value)} />
        <Columns>
          <Caption>1.输入格式</Caption>
          <Caption $indent={9}>2.输入说明</Caption>
          <Box>
            {formats.map((format, i) => (
              <Format key={format} $active={i === 0}><Mono>{format}</Mono></Format>
            ))}
            <ScrollBar>
              <Svg size={10}><path d="M11 2L5 8l6 6" stroke="#505050" strokeWidth="3" /></Svg>
              <Thumb />
              <Svg size={10}><path d="M5 2l6 6-6 6" stroke="#505050" strokeWidth="3" /></Svg>
            </ScrollBar>
          </Box>
          <Box>
            <Description>排数+级别+直径+@+间距，排数没有输入时默认为2。</Description>
          </Box>
        </Columns>
        <Actions>
          <Action $primary>确定</Action>
          <Action>取消</Action>
        </Actions>
      </DialogBody>
    </Dialog>
  );
}

/* ---------- things floating over the window ---------- */

const ImeBar = styled.div`
  position: absolute;
  left: 838px;
  top: 32px;
  display: flex;
  align-items: center;
  gap: 6px;
  height: 24px;
  padding: 0 3px 0 18px;
  border: 1px solid #a9bfd6;
  background-color: #ffffff;
`;

const ImeLogo = styled.div`
  position: absolute;
  left: -15px;
  top: -5px;
`;

const ImeMode = styled.span`
  font-size: 15px;
  font-weight: 700;
  color: #1b75cf;
`;

const Ball = styled.div`
  position: absolute;
  left: 1180px;
  top: -30px;
  display: flex;
  align-items: flex-end;
  justify-content: center;
  width: 50px;
  height: 50px;
  padding-bottom: 5px;
  border: 2px solid #d5d9d5;
  border-radius: 50%;
  background-color: #3fc45c;
  box-shadow: inset 0 0 0 1px #2b9a48, 0 1px 4px rgba(0, 0, 0, 0.5);
  color: #ffffff;
  font-weight: 700;
  line-height: 12px;
`;

const Marks = styled.svg`
  position: absolute;
  left: 0;
  top: 0;
  pointer-events: none;
`;

function SogouLogo({ size }) {
  return (
    <Svg size={size}>
      <path d="M1 2.500L14 .8l1.200 13L2.500 15.500z" fill="#f04a1c" stroke="#f04a1c" strokeLinejoin="round" />
      <path d="M12.500 4.200C9 3 4.500 3.500 4.500 5.800c0 2.700 7.500 1.200 7.500 4 0 2.400-5 2.700-8.500 1.700" stroke="#fff" strokeWidth="2.200" />
    </Svg>
  );
}

function Floating() {
  return (
    <>
      <ImeBar>
        <ImeLogo><SogouLogo size={28} /></ImeLogo>
        <ImeMode>中</ImeMode>
        <Svg>
          <circle cx="4" cy="6" r="2" stroke="#1b75cf" strokeWidth="1.500" />
          <path d="M11 8h2.500v3L11 13.500" stroke="#1b75cf" strokeWidth="1.800" />
        </Svg>
        <Svg>
          <rect x="5" y="0" width="6" height="10" rx="3" fill="#1b75cf" />
          <path d="M2.500 7a5.500 5 0 0011 0M8 12v3M5 15.200h6" stroke="#1b75cf" strokeWidth="1.600" />
        </Svg>
        <Svg>
          <rect y="2" width="16" height="12" rx="1.500" fill="#1b75cf" />
          <path d="M2 5h12M2 8h12" stroke="#fff" strokeWidth="1.500" strokeDasharray="1.600 1" />
          <path d="M4 11.200h8" stroke="#fff" strokeWidth="1.500" />
        </Svg>
        <Svg>
          <circle cx="6.500" cy="4" r="3.200" fill="#bcc7d4" />
          <path d="M0 13c0-4 3-6 6.500-6 2 0 3 .5 4 1.500H7V13z" fill="#bcc7d4" />
          <path d="M9 10v5M15 10h-3v2h2.500v2.500H11.500" stroke="#a7b3c2" strokeWidth="1.200" />
        </Svg>
        <Svg>
          <path d="M5 1.500c1.500 1.500 4.500 1.500 6 0l4.500 2.500-1.500 4-2-.8v8H4v-8L2 8 .5 4z" fill="#1b75cf" />
        </Svg>
        <Svg>
          <path d="M15 4.500l-3 1.500-2-1.800L11.500 1a4.500 4.500 0 00-5 6L1 12.500 3.500 15 9 9.500a4.500 4.500 0 006-5z" fill="#1b75cf" />
        </Svg>
      </ImeBar>
      <Ball>77</Ball>
      <RebarDialog />
      <Marks width="1366" height="260" viewBox="0 0 1366 260" fill="none" aria-hidden="true">
        <ellipse cx="555" cy="225" rx="179" ry="15" stroke="#ff0000" strokeWidth="8" />
        <ellipse cx="1017" cy="156" rx="97" ry="28" stroke="#ff0000" strokeWidth="7" />
      </Marks>
    </>
  );
}

/* ---------- status bar and taskbar ---------- */

const StatusBar = styled.footer`
  display: flex;
  gap: 2px;
  height: 20px;
  white-space: nowrap;
`;

const StatusCell = styled.div`
  flex: ${(props) => (props.$width ? "none" : 1)};
  width: ${(props) => (props.$width ? `${props.$width}px` : "auto")};
  padding: 1px 0 0 1px;
  border: 1px solid #d5d5d5;
  background-color: #f8f8f8;
`;

const Taskbar = styled.div`
  display: flex;
  height: 40px;
  background-color: #020b0f;
  color: #ffffff;
`;

const Start = styled.button`
  width: 48px;
  padding-left: 16px;
  background-color: #000000;
`;

const TaskSearch = styled.label`
  display: flex;
  align-items: center;
  gap: 5px;
  width: 344px;
  margin-right: 2px;
  padding: 0 13px 0 9px;
  background-color: #333333;
`;

const TaskInput = styled.input`
  flex: 1;
  min-width: 0;
  font-size: 14px;

  &::placeholder {
    color: #9a9a9a;
    opacity: 1;
  }
`;

const Task = styled.button`
  display: flex;
  align-items: center;
  justify-content: center;
  width: 48px;
  margin-right: 1px;
  background-color: ${(props) => (props.$active ? "#353d41" : "transparent")};
  border: solid transparent;
  border-width: 2px 0;
  background-image: ${(props) => (props.$open ? "linear-gradient(#76b9fa, #76b9fa)" : "none")};
  background-size: ${(props) => (props.$active ? 48 : 40)}px 2px;
  background-position: bottom;
  background-origin: border-box;
  background-repeat: no-repeat;
`;

const TaskDivider = styled.span`
  align-self: center;
  width: 4px;
  height: 16px;
  margin: 0 12px 0 9px;
  border: solid #4c5356;
  border-width: 0 1px;
`;

const Tray = styled.div`
  display: flex;
  align-items: center;
  gap: 10px;
  margin-left: auto;
`;

const TwoLines = styled.div`
  width: ${(props) => props.$width}px;
  margin-right: ${(props) => props.$gap || 0}px;
  text-align: center;
  line-height: 18px;
  white-space: nowrap;
`;

const ShowDesktop = styled.button`
  width: 5px;
  height: 40px;
  margin-left: 9px;
  border-left: 1px solid #4c4c4c;
`;

const TrayMode = styled.span`
  width: 15px;
  font-size: 14px;
`;

const swirl =
  "M15.500 1.800c-2.500 1.200-5.500-1.300-9.500-.2C1 3.200-.5 9 2.500 12.800c3.500 4 10.500 3.200 12-1.800.3-1.500-.2-3.500-1.500-4.500-1.700-1-4-.6-4.800 1 1.200-.3 2.600.3 2.600 1.800-.2 2.500-4.500 2.700-5.500.2C4.200 6 6.500 4.500 9 4.800c3 .3 5.500-.8 6.500-3z";

function Desktop() {
  return (
    <Taskbar>
      <Start aria-label="开始">
        <Svg>
          <path d="M0 2.300L6.800 1.400v6.200H0zM7.600 1.300L16 0v7.600H7.600zM0 8.400h6.800v6.200L0 13.700zM7.600 8.400H16V16l-8.400-1.200z" fill="#fff" />
        </Svg>
      </Start>
      <TaskSearch>
        <Svg size={22}><circle cx="8" cy="8" r="6.800" stroke="#fff" strokeWidth="1.900" /></Svg>
        <TaskInput aria-label="搜索" placeholder="在这里输入你要搜索的内容" />
        <Svg size={16}><path d="M5.500.5h5v10h-5zM2.800 7v5.500h10.400V7M8 12.500v3M5 15.500h6" stroke="#aaa" strokeWidth="1" /></Svg>
      </TaskSearch>
      <Task aria-label="花瓣">
        <Svg size={22}>
          <rect x=".5" y=".5" width="15" height="15" rx="4" fill="#e6e8e8" />
          {[0, 72, 144, 216, 288].map((angle) => (
            <path
              key={angle}
              d="M8 8C6 6.500 5.800 3 8.200-.5"
              stroke="#020b0f"
              strokeWidth=".8"
              transform={`rotate(${angle} 8 8)`}
            />
          ))}
        </Svg>
      </Task>
      <Task aria-label="旋风">
        <Svg size={20}><path d={swirl} stroke="#dfe3e3" strokeWidth=".8" /></Svg>
      </Task>
      <TaskDivider />
      <Task aria-label="Edge">
        <Svg size={22}>
          <path d="M1 7.500C1.500 3 4.500.8 8.200.8c4.500 0 6.800 3.200 6.800 6.600V9.200H5.600c.2 3 4.800 4 8.400 1.800v3.300c-5.500 2.700-11.500.8-11.500-4.500C2.500 7 4 5.300 6 4.300 3.800 4.500 2 5.700 1 7.500zM5.700 6.600h5c0-3-4.500-3.200-5 0z" fill="#0f80dc" />
        </Svg>
      </Task>
      <Task aria-label="应用商店">
        <Svg size={22}>
          <path d="M.5 4L15 3l-1 12.800L1.500 14z" fill="#fff" />
          <path d="M5 4V2c.5-1.800 4.500-1.800 5.500 0v2" stroke="#fff" strokeWidth="1" />
          <path d="M4 7l3-.3v2.600H4zM7.700 6.600l3.600-.4v3.100H7.700zM4 10h3v2.600L4 12.300zM7.700 10h3.600v3.100l-3.600-.4z" fill="#020b0f" />
        </Svg>
      </Task>
      <Task aria-label="资源管理器">
        <Svg size={22}>
          <path d="M.5 2h5l1.500 1.500h8.500V14H.5z" fill="#f2cf6a" />
          <path d="M.5 4.500h15V14H.5z" fill="#fde69a" />
          <path d="M3.500 14V9h9v5H10v-2.500H6V14z" fill="#3aa3df" />
        </Svg>
      </Task>
      <Task aria-label="G" $open>
        <Svg size={24}><path d={swirl} fill="#2aa2ee" stroke="#2aa2ee" strokeWidth=".8" /></Svg>
      </Task>
      <Task aria-label="浏览器" $open>
        <Svg size={23}>
          <circle cx="8" cy="8.500" r="6.800" fill="#54b82c" stroke="#e4f6d8" strokeWidth=".8" />
          <path d="M11.500 8.800H5M11.300 11c-1.500 1.800-6.300 1.500-6.300-2.200 0-4.200 6.500-4.200 6.500 0" stroke="#fff" strokeWidth="1.800" />
          <path d="M2 15.500C.5 8 8 1.500 15.500 1" stroke="#8de04a" strokeWidth="1" />
        </Svg>
      </Task>
      <Task aria-label="记事" $open>
        <Svg size={24}>
          <rect width="16" height="16" rx="1.500" fill="#f59b1c" />
          <path d="M1 1h14v14H1z" stroke="#ffd06a" />
          <path d="M2.500 5l8-1.500L13 12l-8 2z" fill="#fff" />
          <path d="M4.500 7l5-1M5 9l5-1M5.500 11l3-.6" stroke="#a08060" />
          <path d="M14.500 1.500L8.500 10" stroke="#9a3b12" strokeWidth="1.600" />
        </Svg>
      </Task>
      <Task aria-label="广联达" $open $active><AppLogo size={23} /></Task>
      <Tray>
        <TwoLines $width={50} $gap={9}>12%<br />CPU使用</TwoLines>
        <Svg size={13}><path d="M1 11l7-7 7 7" stroke="#fff" strokeWidth="1.600" /></Svg>
        <Svg size={15}>
          <rect width="16" height="16" fill="#343a34" />
          <path d="M1 8c3-4.500 9-5 13-1-3 5-9 6-13 1z" stroke="#76b900" strokeWidth="1.300" />
          <circle cx="8" cy="7.800" r="2.500" stroke="#76b900" strokeWidth="1.300" />
        </Svg>
        <Svg>
          <path d="M4.500 5.500h10v7h-10zM15.500 7.500v3" stroke="#fff" />
          <path d="M6 7h7v4H6z" fill="#fff" />
          <path d="M0 3h5v2.500H0z" fill="#fff" />
          <path d="M1.500 1v2M3.500 1v2M2.500 5v5.500h2" stroke="#fff" />
        </Svg>
        <Svg>
          <path d="M2 13C2 7 7 2 13.500 2M5 13.500C5 9 9 5 14 5M8 14c0-3.500 3-6 6.500-6M11 14c0-2 1.500-3 3.500-3" stroke="#ddd" strokeWidth="1.200" />
          <circle cx="13.500" cy="13.500" r="1.300" fill="#fff" />
        </Svg>
        <Svg><path d="M1 6h2.500L7 2.500v11L3.500 10H1zM9 5.500c1.500 1.500 1.500 3.500 0 5M11.500 4c2 2.500 2 5.500 0 8M14 2.500c2.500 3.500 2.500 7.500 0 11" stroke="#fff" strokeWidth="1" /></Svg>
        <TrayMode>中</TrayMode>
        <SogouLogo size={17} />
        <TwoLines $width={60} $gap={8}>14:27<br />2017/7/16</TwoLines>
        <Svg size={18}><path d="M1 1.500h14v10.500h-4.500v3L7.500 12H1z" stroke="#fff" strokeWidth="1.200" /></Svg>
        <ShowDesktop aria-label="显示桌面" />
      </Tray>
    </Taskbar>
  );
}

function App() {
  return (
    <Screen>
      <GlobalStyle />
      <Header />
      <Toolbar />
      <Main>
        <ModuleDock />
        <Work>
          <ComponentBar />
          <ComponentList />
          <PropertyTable />
        </Work>
      </Main>
      <StatusBar>
        <StatusCell $width={148} />
        <StatusCell $width={78}><Mono>层高:4.5m</Mono></StatusCell>
        <StatusCell $width={98}><Mono>底标高:-0.03m</Mono></StatusCell>
        <StatusCell $width={48}><Mono>0</Mono></StatusCell>
        <StatusCell><Mono>格式:排数+直径+@+间距,不同直径用加号连接,例如2C12@200表示2排钢筋</Mono></StatusCell>
        <StatusCell $width={70}><Mono>207.1 FPS</Mono></StatusCell>
      </StatusBar>
      <Desktop />
      <Floating />
    </Screen>
  );
}

export default App;
